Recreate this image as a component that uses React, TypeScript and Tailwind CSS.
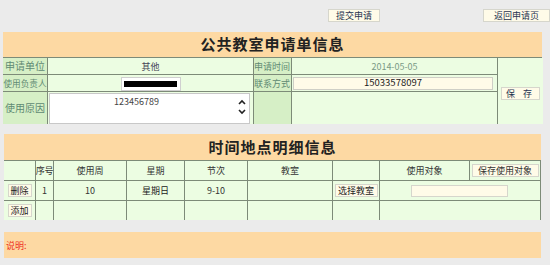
const font = { fontFamily: '"Noto Sans CJK SC", "Liberation Sans", sans-serif' };

const Btn = ({ children, className = "" }: { children: React.ReactNode; className?: string }) => (
  <div
    className={`flex items-center justify-center bg-[#fffbe8] border border-[#d6d6cc] text-[9px] text-[#1f3350] leading-none whitespace-nowrap ${className}`}
  >
    {children}
  </div>
);

const Label = ({ children, className = "" }: { children?: React.ReactNode; className?: string }) => (
  <div className={`bg-[#d6efc6] text-[#5f8a73] leading-none flex items-center whitespace-nowrap overflow-hidden ${className}`}>
    {children}
  </div>
);

const Cell = ({ children, className = "" }: { children?: React.ReactNode; className?: string }) => (
  <div className={`bg-[#ecfde2] flex items-center justify-center text-[9px] leading-none whitespace-nowrap ${className}`}>{children}</div>
);

export default function App() {
  return (
    <div className="w-[550px] h-[265px] bg-[#ebebeb] overflow-hidden" style={font}>
      {/* top actions */}
      <div className="flex h-[32px] pt-[9px]">
        <Btn className="ml-[328px] w-[52px] h-[13px]">提交申请</Btn>
        <Btn className="ml-[103px] w-[67px] h-[13px]">返回申请页</Btn>
      </div>

      {/* 申请单信息 */}
      <div className="ml-[3px] w-[539px]">
        <div className="h-[25px] bg-[#fdd9a3] flex items-center justify-center font-bold text-[15px] text-[#222] tracking-[1px]">
          公共教室申请单信息
        </div>
        <div className="grid grid-cols-[44px_205px_37px_205px_45px] grid-rows-[16px_16px_32px] gap-px bg-[#7d8b78] pt-px">
          <Label className="justify-center text-[10px]">申请单位</Label>
          <Cell className="text-[#445]">其他</Cell>
          <Label className="text-[9px]">申请时间</Label>
          <Cell className="text-[#7a9a86]">2014-05-05</Cell>
          <div className="row-span-3 bg-[#ecfde2] flex items-center justify-center">
            <Btn className="w-[39px] h-[13px] tracking-[3px] mt-[4px]">保 存</Btn>
          </div>

          <Label className="justify-center text-[8.6px]">使用负责人</Label>
          <Cell>
            <div className="w-[60px] h-[14px] bg-white border border-[#d0d0d0] flex items-center justify-center mt-[1px]">
              <div className="w-[53px] h-[6px] bg-black" />
            </div>
          </Cell>
          <Label className="text-[9px]">联系方式</Label>
          <div className="bg-[#ecfde2] flex items-center pl-px">
            <div className="w-[200px] h-[13px] bg-[#fffbe8] border border-[#cfcfc6] flex items-center justify-center text-[9.5px] text-[#222] leading-none">
              15033578097
            </div>
          </div>

          <Label className="justify-center text-[10px]">使用原因</Label>
          <div className="bg-[#ecfde2] flex items-center pl-px">
            <div className="w-[201px] h-[31px] bg-white border border-[#c8c8c8] relative">
              <span className="absolute left-[64px] top-[3px] text-[9px] text-[#444] leading-none">123456789</span>
              <div className="absolute right-[3px] top-[5px] flex flex-col gap-[2px]">
                <svg width="8" height="6" viewBox="0 0 8 6">
                  <path d="M1 5 L4 2 L7 5" stroke="#222" strokeWidth="1.6" fill="none" />
                </svg>
                <svg width="8" height="6" viewBox="0 0 8 6" className="mt-[2px]">
                  <path d="M1 1 L4 4 L7 1" stroke="#222" strokeWidth="1.6" fill="none" />
                </svg>
              </div>
            </div>
          </div>
          <Label />
          <Cell />
        </div>
      </div>

      {/* 时间地点明细信息 */}
      <div className="ml-[4px] mt-[10px] w-[537px]">
        <div className="h-[26px] bg-[#fdd9a3] flex items-center justify-center font-bold text-[15px] text-[#222] tracking-[1px]">
          时间地点明细信息
        </div>
        <div className="grid grid-cols-[31px_17px_72px_57px_62px_84px_46px_89px_70px] grid-rows-[19px_19px_19px] gap-px bg-[#7d8b78] pt-px text-[#333]">
          <Cell className="bg-[#d6efc6]" />
          <Cell className="bg-[#d6efc6] text-[8.5px] tracking-[-0.3px]">序号</Cell>
          <Cell className="bg-[#d6efc6]">使用周</Cell>
          <Cell className="bg-[#d6efc6]">星期</Cell>
          <Cell className="bg-[#d6efc6]">节次</Cell>
          <Cell className="bg-[#d6efc6]">教室</Cell>
          <Cell className="bg-[#ecfde2]" />
          <Cell className="bg-[#d6efc6]">使用对象</Cell>
          <Cell className="bg-[#ecfde2]">
            <Btn className="w-[67px] h-[13px] text-[#333]">保存使用对象</Btn>
          </Cell>

          <Cell>
            <Btn className="w-[24px] h-[13px] text-[#222]">删除</Btn>
          </Cell>
          <Cell>1</Cell>
          <Cell>10</Cell>
          <Cell className="text-[9.5px] text-[#222]">星期日</Cell>
          <Cell>9-10</Cell>
          <Cell />
          <Cell>
            <Btn className="w-[43px] h-[13px] text-[#222]">选择教室</Btn>
          </Cell>
          <div className="col-span-2 bg-[#ecfde2] flex items-center pl-[31px]">
            <div className="w-[97px] h-[12px] bg-[#fffbe8] border border-[#d6d6cc]" />
          </div>

          <Cell>
            <Btn className="w-[24px] h-[13px] text-[#222]">添加</Btn>
          </Cell>
          <Cell />
          <Cell />
          <Cell />
          <Cell />
          <Cell />
          <Cell />
          <div className="col-span-2 bg-[#ecfde2]" />
        </div>
      </div>

      {/* 说明 */}
      <div className="ml-[4px] mt-[12px] w-[537px] h-[26px] bg-[#fdd9a3] flex items-center pl-[2px] text-[9px] text-[#ee3322] leading-none">
        说明:
      </div>
    </div>
  );
}
